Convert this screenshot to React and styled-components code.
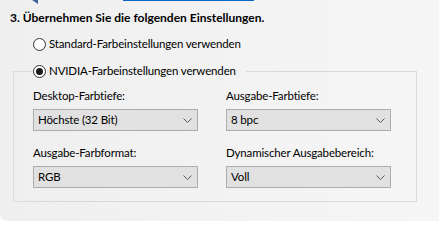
import styled, { createGlobalStyle } from "styled-components";

const GlobalStyle = createGlobalStyle`
  body {
    margin: 0;
    background: #ffffff;
    font-family: Lato, "Liberation Sans", sans-serif;
    font-size: 11.5px;
    letter-spacing: -0.15px;
    color: #000;
  }
`;

const Panel = styled.div`
  height: 221px;
  background: linear-gradient(to right, #efefef, #f6f6f6);
  border-bottom-left-radius: 7px;
  overflow: hidden;
`;

const TopStrip = styled.div`
  display: flex;
  align-items: flex-start;
  height: 5px;
`;

const Glyph = styled.svg`
  margin-left: 32px;
  display: block;
`;

const AccentBar = styled.div`
  margin-left: 85px;
  width: 131px;
  height: 1px;
  background: #0a66c8;
`;

const Title = styled.div`
  margin-top: 5px;
  padding-left: 10px;
  font-size: 12px;
  letter-spacing: 0;
  font-weight: 700;
  line-height: 16px;
`;

const RadioRow = styled.label`
  display: flex;
  align-items: center;
  gap: 3px;
  line-height: 16px;
  white-space: nowrap;
  margin: ${(p) => p.$margin || "0"};
`;

const Radio = styled.span`
  width: 13px;
  height: 13px;
  box-sizing: border-box;
  border: 1px solid #333;
  border-radius: 50%;
  background: #fff;
  display: flex;
  align-items: center;
  justify-content: center;

  &::after {
    content: "";
    width: 7px;
    height: 7px;
    border-radius: 50%;
    background: ${(p) => (p.$checked ? "#1a1a1a" : "transparent")};
  }
`;

const Group = styled.fieldset`
  margin: 11px 0 0 13px;
  width: 404px;
  box-sizing: border-box;
  border: 1px solid #dadada;
  padding: 9px 25px 13px 19px;
  min-inline-size: 0;
`;

const Legend = styled.legend`
  padding: 0 10px 0 0;
`;

const Grid = styled.div`
  display: grid;
  grid-template-columns: 165px 165px;
  column-gap: 28px;
  row-gap: 14px;
`;

const Field = styled.div`
  display: flex;
  flex-direction: column;
  gap: 5px;
`;

const Label = styled.div`
  line-height: 16px;
  white-space: nowrap;
`;

const Select = styled.div`
  height: 22px;
  box-sizing: border-box;
  border: 1px solid #adadad;
  background: #e1e1e1;
  display: flex;
  align-items: center;
  justify-content: space-between;
  padding: 0 5px 0 4px;
  line-height: 16px;
`;

const Chevron = () => (
  <svg width="9" height="5" viewBox="0 0 9 5">
    <path d="M0.5 0.5 L4.5 4.5 L8.5 0.5" fill="none" stroke="#5a5a5a" strokeWidth="1" />
  </svg>
);

const fields = [
  { label: "Desktop-Farbtiefe:", value: "Höchste (32 Bit)" },
  { label: "Ausgabe-Farbtiefe:", value: "8 bpc" },
  { label: "Ausgabe-Farbformat:", value: "RGB" },
  { label: "Dynamischer Ausgabebereich:", value: "Voll" },
];

export default function App() {
  return (
    <>
      <GlobalStyle />
      <Panel>
        <TopStrip>
          <Glyph width="6" height="4" viewBox="0 0 6 4">
            <path d="M0 0 L6 0 L6 4 Z" fill="#3d5f98" />
          </Glyph>
          <AccentBar />
        </TopStrip>
        <Title>3. Übernehmen Sie die folgenden Einstellungen.</Title>
        <RadioRow $margin="10px 0 0 33px">
          <Radio />
          Standard-Farbeinstellungen verwenden
        </RadioRow>
        <Group>
          <Legend>
            <RadioRow>
              <Radio $checked />
              NVIDIA-Farbeinstellungen verwenden
            </RadioRow>
          </Legend>
          <Grid>
            {fields.map((f) => (
              <Field key={f.label}>
                <Label>{f.label}</Label>
                <Select>
                  {f.value}
                  <Chevron />
                </Select>
              </Field>
            ))}
          </Grid>
        </Group>
      </Panel>
    </>
  );
}
